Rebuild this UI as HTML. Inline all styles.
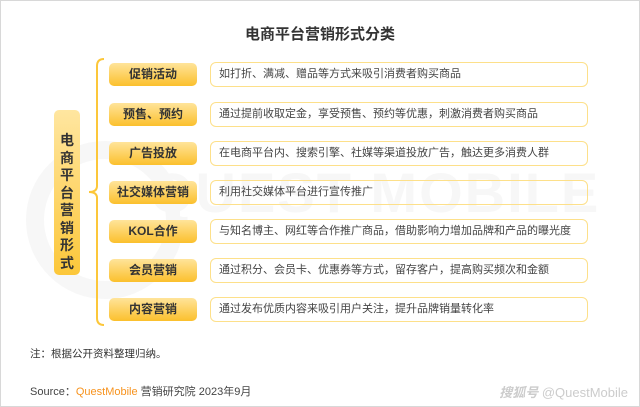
<!DOCTYPE html>
<html><head><meta charset="utf-8"><style>
*{margin:0;padding:0;box-sizing:border-box}
body{width:640px;height:407px;background:#fff;font-family:"Liberation Sans","Noto Sans CJK SC",sans-serif;position:relative;overflow:hidden}
.frame{position:absolute;left:0;top:0;width:640px;height:407px;border:1px solid #d8d8d8}
.title{position:absolute;top:23px;left:0;width:640px;text-align:center;font-size:15px;font-weight:bold;color:#333}
.left{position:absolute;left:54px;top:110px;width:26px;height:165px;border-radius:5px;background:linear-gradient(#ffe6a0,#fcc73a);font-size:14px;font-weight:bold;color:#333;text-align:center;line-height:17.5px;padding-top:22px}
.lab{position:absolute;left:109px;width:88px;height:23px;border-radius:5px;background:linear-gradient(#ffe49a,#fbc02d);font-size:12px;font-weight:bold;color:#333;text-align:center;line-height:23px}
.desc{position:absolute;left:210px;width:378px;height:25px;border:1.5px solid #fde08a;border-radius:6px;font-size:11px;color:#444;line-height:22px;padding-left:8px}
.note{position:absolute;left:30px;top:346px;font-size:10.5px;color:#333}
.src{position:absolute;left:30px;top:383px;font-size:11px;color:#444}
.src b{color:#f7931e;font-weight:normal}
.wm{position:absolute;right:12px;top:382px;font-size:13px;color:#ccc}
.bg{position:absolute;font-size:56px;color:#f7f7f7;font-weight:bold;letter-spacing:2px}
</style></head><body>
<div class="frame"></div>
<div class="bg" style="left:150px;top:160px">QUEST MOBILE</div>
<svg style="position:absolute;left:20px;top:120px" width="160" height="200"><circle cx="85" cy="100" r="70" fill="none" stroke="#f7f7f7" stroke-width="18"/></svg>
<div class="title">电商平台营销形式分类</div>
<svg style="position:absolute;left:0;top:0" width="640" height="407"><path d="M104 59 Q97 59 97 66 L97 186 Q97 192 89 192 Q97 192 97 198 L97 318 Q97 325 104 325" fill="none" stroke="#fcc73a" stroke-width="2"/></svg>
<div class="left">电<br>商<br>平<br>台<br>营<br>销<br>形<br>式</div>
<div class="lab" style="top:63px">促销活动</div><div class="desc" style="top:62px">如打折、满减、赠品等方式来吸引消费者购买商品</div>
<div class="lab" style="top:103px">预售、预约</div><div class="desc" style="top:102px">通过提前收取定金，享受预售、预约等优惠，刺激消费者购买商品</div>
<div class="lab" style="top:142px">广告投放</div><div class="desc" style="top:141px">在电商平台内、搜索引擎、社媒等渠道投放广告，触达更多消费人群</div>
<div class="lab" style="top:181px">社交媒体营销</div><div class="desc" style="top:180px">利用社交媒体平台进行宣传推广</div>
<div class="lab" style="top:220px">KOL合作</div><div class="desc" style="top:219px">与知名博主、网红等合作推广商品，借助影响力增加品牌和产品的曝光度</div>
<div class="lab" style="top:259px">会员营销</div><div class="desc" style="top:258px">通过积分、会员卡、优惠券等方式，留存客户，提高购买频次和金额</div>
<div class="lab" style="top:298px">内容营销</div><div class="desc" style="top:297px">通过发布优质内容来吸引用户关注，提升品牌销量转化率</div>
<div class="note">注：根据公开资料整理归纳。</div>
<div class="src">Source：<b>QuestMobile</b> 营销研究院 2023年9月</div>
<div class="wm"><i style="font-weight:bold">搜狐号</i> @QuestMobile</div>
</body></html>
